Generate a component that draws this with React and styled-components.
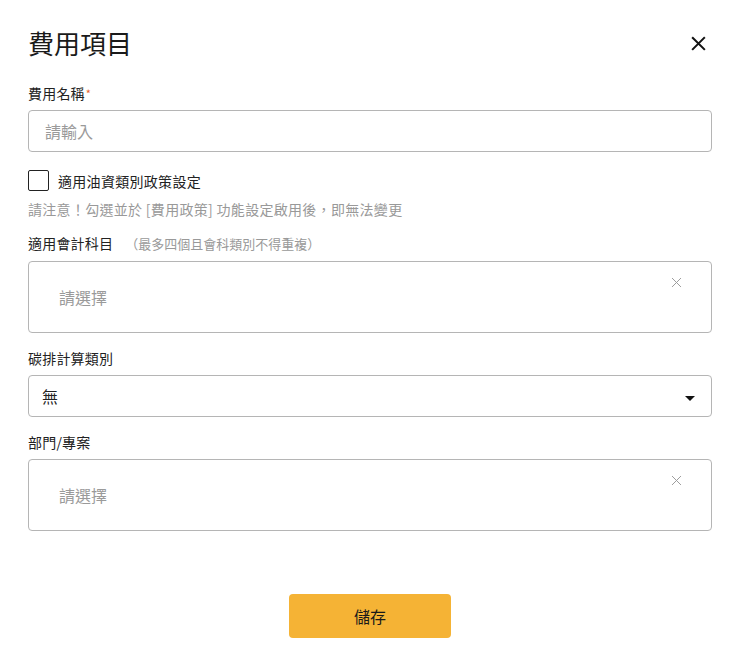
import React, { useState } from 'react';
import styled, { createGlobalStyle } from 'styled-components';

const GlobalStyle = createGlobalStyle`
  body {
    margin: 0;
    background: #fff;
    font-family: "Noto Sans CJK TC", "Noto Sans", sans-serif;
    color: #222;
  }
`;

const Modal = styled.div`
  width: 684px;
  padding: 25px 25px 21px 28px;
  display: flex;
  flex-direction: column;
`;

const Header = styled.div`
  display: flex;
  align-items: center;
  justify-content: space-between;
  height: 36px;
`;

const Title = styled.h1`
  margin: 0;
  font-size: 26px;
  font-weight: 400;
  line-height: 36px;
  color: #1a1a1a;
`;

const CloseButton = styled.button`
  border: none;
  background: none;
  padding: 0;
  margin-right: 6px;
  width: 16px;
  height: 16px;
  display: flex;
  align-items: center;
  justify-content: center;
  cursor: pointer;
`;

const Field = styled.div`
  display: flex;
  flex-direction: column;
  margin-top: ${(p) => p.$mt || 15}px;
`;

const Label = styled.label`
  font-size: 14px;
  line-height: 20px;
  margin-bottom: 7px;
  color: #222;
  letter-spacing: 0.2px;
`;

const Required = styled.span`
  color: #e8622f;
  font-size: 11px;
  vertical-align: top;
  margin-left: 1px;
`;

const Hint = styled.span`
  font-size: 13px;
  color: #999;
  margin-left: 12px;
  letter-spacing: 0;
`;

const TextInput = styled.input`
  box-sizing: border-box;
  height: 42px;
  border: 1px solid #b5b5b5;
  border-radius: 4px;
  padding: 0 16px;
  font-family: inherit;
  font-size: 16px;
  color: #222;
  outline: none;
  &::placeholder {
    color: #9a9a9a;
  }
`;

const CheckRow = styled.label`
  display: flex;
  align-items: center;
  gap: 9px;
  margin-top: 18px;
  font-size: 14px;
  line-height: 20px;
  letter-spacing: 0.3px;
  cursor: pointer;
`;

const Box = styled.span`
  box-sizing: border-box;
  width: 21px;
  height: 21px;
  border: 1px solid #222;
  border-radius: 2px;
  background: ${(p) => (p.$checked ? '#f5b335' : '#fff')};
`;

const Note = styled.p`
  margin: 8px 0 0;
  font-size: 14px;
  line-height: 20px;
  letter-spacing: 0.3px;
  color: #999;
`;

const MultiBox = styled.div`
  box-sizing: border-box;
  height: 72px;
  border: 1px solid #b5b5b5;
  border-radius: 4px;
  padding: 0 29px 0 30px;
  display: flex;
  justify-content: space-between;
  font-size: 16px;
`;

const Placeholder = styled.span`
  color: #9a9a9a;
  align-self: center;
`;

const ClearIcon = styled.span`
  margin-top: 15px;
  height: 12px;
  display: flex;
`;

const Select = styled.div`
  box-sizing: border-box;
  height: 42px;
  border: 1px solid #b5b5b5;
  border-radius: 4px;
  padding: 0 16px 0 13px;
  display: flex;
  align-items: center;
  justify-content: space-between;
  font-size: 16px;
  color: #222;
  cursor: pointer;
`;

const Caret = styled.span`
  width: 0;
  height: 0;
  margin-top: 4px;
  border-left: 5px solid transparent;
  border-right: 5px solid transparent;
  border-top: 5px solid #111;
`;

const Footer = styled.div`
  display: flex;
  justify-content: center;
  margin-top: 63px;
`;

const SaveButton = styled.button`
  width: 162px;
  height: 44px;
  border: none;
  border-radius: 4px;
  background: #f5b335;
  font-family: inherit;
  font-size: 16px;
  color: #1a1a1a;
  cursor: pointer;
`;

const Cross = ({ size, color, width }) => (
  <svg width={size} height={size} viewBox="0 0 16 16" fill="none">
    <path d="M2 2L14 14M14 2L2 14" stroke={color} strokeWidth={width} strokeLinecap="square" />
  </svg>
);

const MultiSelect = () => (
  <MultiBox>
    <Placeholder>請選擇</Placeholder>
    <ClearIcon>
      <Cross size={11} color="#999" width={1.4} />
    </ClearIcon>
  </MultiBox>
);

const App = () => {
  const [checked, setChecked] = useState(false);

  return (
    <Modal>
      <GlobalStyle />
      <Header>
        <Title>費用項目</Title>
        <CloseButton aria-label="close">
          <Cross size={15} color="#111" width={2.2} />
        </CloseButton>
      </Header>

      <Field $mt={22}>
        <Label>
          費用名稱<Required>*</Required>
        </Label>
        <TextInput placeholder="請輸入" />
      </Field>

      <CheckRow onClick={() => setChecked(!checked)}>
        <Box $checked={checked} />
        適用油資類別政策設定
      </CheckRow>
      <Note>請注意！勾選並於 [費用政策] 功能設定啟用後，即無法變更</Note>

      <Field $mt={14}>
        <Label>
          適用會計科目<Hint>（最多四個且會科類別不得重複）</Hint>
        </Label>
        <MultiSelect />
      </Field>

      <Field>
        <Label>碳排計算類別</Label>
        <Select>
          無
          <Caret />
        </Select>
      </Field>

      <Field>
        <Label>部門/專案</Label>
        <MultiSelect />
      </Field>

      <Footer>
        <SaveButton>儲存</SaveButton>
      </Footer>
    </Modal>
  );
};

export default App;
